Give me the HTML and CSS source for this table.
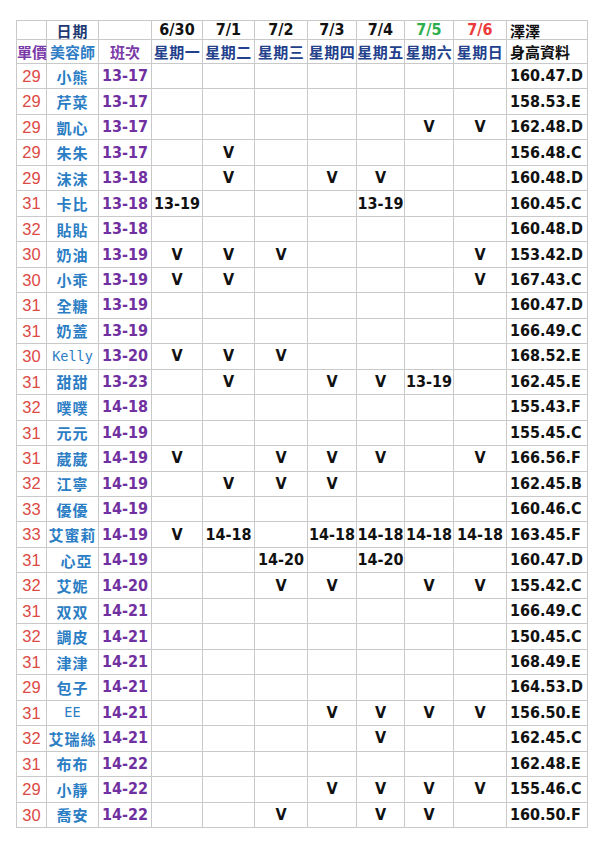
FILE: index.html
```html
<!DOCTYPE html>
<html lang="zh-Hant">
<head>
<meta charset="utf-8">
<title>班表</title>
<link rel="stylesheet" href="styles.css">
</head>
<body>
<table class="sheet">
<colgroup>
<col class="c-p"><col class="c-n"><col class="c-s"><col class="c-d1"><col class="c-d2"><col class="c-d3"><col class="c-d4"><col class="c-d5"><col class="c-d6"><col class="c-d7"><col class="c-h">
</colgroup>
<thead>
<tr class="r1">
<td></td><td class="hd-navy">日期</td><td></td>
<td class="date">6/30</td><td class="date">7/1</td><td class="date">7/2</td><td class="date">7/3</td><td class="date">7/4</td><td class="date green">7/5</td><td class="date red">7/6</td>
<td class="hd-left">澤澤</td>
</tr>
<tr class="r2">
<td class="hd-purple">單價</td><td class="hd-blue">美容師</td><td class="hd-purple">班次</td>
<td class="wk">星期一</td><td class="wk">星期二</td><td class="wk">星期三</td><td class="wk">星期四</td><td class="wk">星期五</td><td class="wk green">星期六</td><td class="wk red">星期日</td>
<td class="hd-left">身高資料</td>
</tr>
</thead>
<tbody>
<tr><td class="p">29</td><td class="n">小熊</td><td class="s">13-17</td><td></td><td></td><td></td><td></td><td></td><td></td><td></td><td class="h">160.47.D</td></tr>
<tr><td class="p">29</td><td class="n">芹菜</td><td class="s">13-17</td><td></td><td></td><td></td><td></td><td></td><td></td><td></td><td class="h">158.53.E</td></tr>
<tr><td class="p">29</td><td class="n">凱心</td><td class="s">13-17</td><td></td><td></td><td></td><td></td><td></td><td class="m">V</td><td class="m">V</td><td class="h">162.48.D</td></tr>
<tr><td class="p">29</td><td class="n">朱朱</td><td class="s">13-17</td><td></td><td class="m">V</td><td></td><td></td><td></td><td></td><td></td><td class="h">156.48.C</td></tr>
<tr><td class="p">29</td><td class="n">沫沫</td><td class="s">13-18</td><td></td><td class="m">V</td><td></td><td class="m">V</td><td class="m">V</td><td></td><td></td><td class="h">160.48.D</td></tr>
<tr><td class="p">31</td><td class="n">卡比</td><td class="s">13-18</td><td class="m">13-19</td><td></td><td></td><td></td><td class="m">13-19</td><td></td><td></td><td class="h">160.45.C</td></tr>
<tr><td class="p">32</td><td class="n">貼貼</td><td class="s">13-18</td><td></td><td></td><td></td><td></td><td></td><td></td><td></td><td class="h">160.48.D</td></tr>
<tr><td class="p">30</td><td class="n">奶油</td><td class="s">13-19</td><td class="m">V</td><td class="m">V</td><td class="m">V</td><td></td><td></td><td></td><td class="m">V</td><td class="h">153.42.D</td></tr>
<tr><td class="p">30</td><td class="n">小乖</td><td class="s">13-19</td><td class="m">V</td><td class="m">V</td><td></td><td></td><td></td><td></td><td class="m">V</td><td class="h">167.43.C</td></tr>
<tr><td class="p">31</td><td class="n">全糖</td><td class="s">13-19</td><td></td><td></td><td></td><td></td><td></td><td></td><td></td><td class="h">160.47.D</td></tr>
<tr><td class="p">31</td><td class="n">奶蓋</td><td class="s">13-19</td><td></td><td></td><td></td><td></td><td></td><td></td><td></td><td class="h">166.49.C</td></tr>
<tr><td class="p">30</td><td class="n latin">Kelly</td><td class="s">13-20</td><td class="m">V</td><td class="m">V</td><td class="m">V</td><td></td><td></td><td></td><td></td><td class="h">168.52.E</td></tr>
<tr><td class="p">31</td><td class="n">甜甜</td><td class="s">13-23</td><td></td><td class="m">V</td><td></td><td class="m">V</td><td class="m">V</td><td class="m">13-19</td><td></td><td class="h">162.45.E</td></tr>
<tr><td class="p">32</td><td class="n">噗噗</td><td class="s">14-18</td><td></td><td></td><td></td><td></td><td></td><td></td><td></td><td class="h">155.43.F</td></tr>
<tr><td class="p">31</td><td class="n">元元</td><td class="s">14-19</td><td></td><td></td><td></td><td></td><td></td><td></td><td></td><td class="h">155.45.C</td></tr>
<tr><td class="p">31</td><td class="n">葳葳</td><td class="s">14-19</td><td class="m">V</td><td></td><td class="m">V</td><td class="m">V</td><td class="m">V</td><td></td><td class="m">V</td><td class="h">166.56.F</td></tr>
<tr><td class="p">32</td><td class="n">江寧</td><td class="s">14-19</td><td></td><td class="m">V</td><td class="m">V</td><td class="m">V</td><td></td><td></td><td></td><td class="h">162.45.B</td></tr>
<tr><td class="p">33</td><td class="n">優優</td><td class="s">14-19</td><td></td><td></td><td></td><td></td><td></td><td></td><td></td><td class="h">160.46.C</td></tr>
<tr><td class="p">33</td><td class="n">艾蜜莉</td><td class="s">14-19</td><td class="m">V</td><td class="m">14-18</td><td></td><td class="m">14-18</td><td class="m">14-18</td><td class="m">14-18</td><td class="m">14-18</td><td class="h">163.45.F</td></tr>
<tr><td class="p">31</td><td class="n indent">心亞</td><td class="s">14-19</td><td></td><td></td><td class="m">14-20</td><td></td><td class="m">14-20</td><td></td><td></td><td class="h">160.47.D</td></tr>
<tr><td class="p">32</td><td class="n">艾妮</td><td class="s">14-20</td><td></td><td></td><td class="m">V</td><td class="m">V</td><td></td><td class="m">V</td><td class="m">V</td><td class="h">155.42.C</td></tr>
<tr><td class="p">31</td><td class="n">双双</td><td class="s">14-21</td><td></td><td></td><td></td><td></td><td></td><td></td><td></td><td class="h">166.49.C</td></tr>
<tr><td class="p">32</td><td class="n">調皮</td><td class="s">14-21</td><td></td><td></td><td></td><td></td><td></td><td></td><td></td><td class="h">150.45.C</td></tr>
<tr><td class="p">31</td><td class="n">津津</td><td class="s">14-21</td><td></td><td></td><td></td><td></td><td></td><td></td><td></td><td class="h">168.49.E</td></tr>
<tr><td class="p">29</td><td class="n">包子</td><td class="s">14-21</td><td></td><td></td><td></td><td></td><td></td><td></td><td></td><td class="h">164.53.D</td></tr>
<tr><td class="p">31</td><td class="n latin">EE</td><td class="s">14-21</td><td></td><td></td><td></td><td class="m">V</td><td class="m">V</td><td class="m">V</td><td class="m">V</td><td class="h">156.50.E</td></tr>
<tr><td class="p">32</td><td class="n">艾瑞絲</td><td class="s">14-21</td><td></td><td></td><td></td><td></td><td class="m">V</td><td></td><td></td><td class="h">162.45.C</td></tr>
<tr><td class="p">31</td><td class="n">布布</td><td class="s">14-22</td><td></td><td></td><td></td><td></td><td></td><td></td><td></td><td class="h">162.48.E</td></tr>
<tr><td class="p">29</td><td class="n">小靜</td><td class="s">14-22</td><td></td><td></td><td></td><td class="m">V</td><td class="m">V</td><td class="m">V</td><td class="m">V</td><td class="h">155.46.C</td></tr>
<tr><td class="p">30</td><td class="n">喬安</td><td class="s">14-22</td><td></td><td></td><td class="m">V</td><td></td><td class="m">V</td><td class="m">V</td><td></td><td class="h">160.50.F</td></tr>
</tbody>
</table>
</body>
</html>
```
FILE: styles.css
```css
html, body {
  margin: 0;
  background: #ffffff;
}
body {
  padding: 20px 0 0 16px;
}
.sheet {
  border-collapse: collapse;
  table-layout: fixed;
  width: 571px;
}
.c-p { width: 30px; }
.c-n { width: 52px; }
.c-s { width: 53px; }
.c-d1 { width: 51px; }
.c-d2 { width: 52px; }
.c-d3 { width: 53px; }
.c-d4 { width: 49px; }
.c-d5 { width: 48px; }
.c-d6 { width: 49px; }
.c-d7 { width: 53px; }
.c-h { width: 81px; }

.sheet td {
  border: 1px solid #c9c9c9;
  padding: 0;
  text-align: center;
  vertical-align: middle;
  white-space: nowrap;
  overflow: visible;
  line-height: 1;
  font-family: "DejaVu Sans Condensed", "DejaVu Sans", sans-serif;
  font-stretch: condensed;
  font-weight: bold;
  font-size: 16px;
  color: #111111;
}
.r1 td { height: 18px; }
.r2 td { height: 23px; }
tbody tr td { height: 24.47px; }

.date {
  font-size: 16.5px;
}
.green { color: #2fae4e !important; }
.red { color: #ec3b3b !important; }

.hd-navy, .hd-blue, .hd-purple, .wk, .hd-left, .n {
  font-family: "Noto Sans CJK TC", "Noto Sans CJK SC", sans-serif !important;
  font-stretch: normal !important;
}
.hd-navy {
  color: #1f3a73 !important;
  font-size: 15px !important;
  letter-spacing: 1px;
}
.hd-blue {
  color: #2d7cc4 !important;
  font-size: 15px !important;
}
.hd-purple {
  color: #7a3aa8 !important;
  font-size: 15px !important;
}
.wk {
  color: #22408c !important;
  font-size: 15px !important;
  font-weight: 700 !important;
  letter-spacing: 0.5px;
}
.hd-left {
  text-align: left !important;
  padding-left: 3px !important;
  font-size: 15px !important;
  font-weight: 700 !important;
}

.p {
  font-family: "Liberation Sans", Arial, sans-serif !important;
  font-stretch: normal !important;
  font-weight: normal !important;
  font-size: 16.5px !important;
  color: #dc4a45 !important;
}
.n {
  color: #2b7dc4 !important;
  font-size: 15px !important;
  font-weight: 700 !important;
  letter-spacing: 1px;
}
.n.latin {
  font-family: "DejaVu Sans Mono", "Liberation Mono", monospace !important;
  font-size: 13.5px !important;
  font-weight: normal !important;
  letter-spacing: 0;
}
.n.indent {
  padding-left: 8px !important;
}
.s {
  color: #7030a0 !important;
  font-size: 16px !important;
}
.m {
  color: #111111;
}
.h {
  text-align: left !important;
  padding-left: 3px !important;
}
```
